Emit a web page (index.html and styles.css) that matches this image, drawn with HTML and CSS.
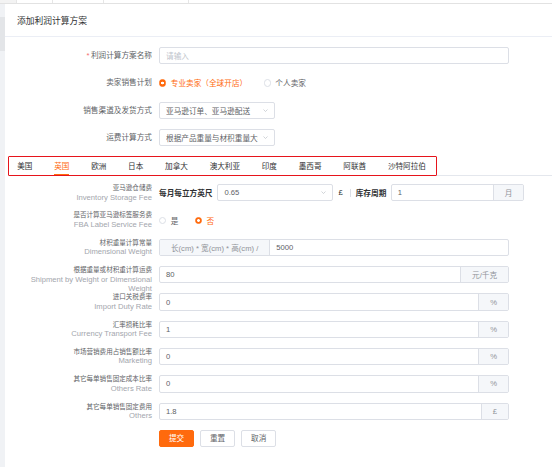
FILE: index.html
```html
<!DOCTYPE html>
<html lang="zh-CN">
<head>
<meta charset="utf-8">
<title>添加利润计算方案</title>
<link rel="stylesheet" href="styles.css">
</head>
<body>
<div class="page">
  <div class="topbar">
    <span class="tb tb-a"></span><span class="tb tb-b"></span><span class="tb tb-c"></span><span class="tb tb-d"></span>
  </div>
  <div class="main">
    <aside class="side"><div class="side-mark"></div></aside>
    <section class="panel">
      <header class="panel-head">添加利润计算方案</header>
      <form class="form">
        <div class="row">
          <label class="label"><span class="req">*</span>利润计算方案名称</label>
          <div class="input w-full"><span class="ph">请输入</span></div>
        </div>
        <div class="row">
          <label class="label">卖家销售计划</label>
          <div class="radios">
            <span class="radio checked"><i class="dot"></i>专业卖家（全球开店）</span>
            <span class="radio"><i class="dot"></i>个人卖家</span>
          </div>
        </div>
        <div class="row">
          <label class="label">销售渠道及发货方式</label>
          <div class="input select w-sel"><span class="val">亚马逊订单、亚马逊配送</span><svg class="chev" viewBox="0 0 10 6" width="5" height="3"><polyline points="1,1 5,5 9,1" fill="none" stroke="#b4b8bf" stroke-width="1.2"/></svg></div>
        </div>
        <div class="row">
          <label class="label">运费计算方式</label>
          <div class="input select w-sel"><span class="val">根据产品重量与材积重量大者计算</span><svg class="chev" viewBox="0 0 10 6" width="5" height="3"><polyline points="1,1 5,5 9,1" fill="none" stroke="#b4b8bf" stroke-width="1.2"/></svg></div>
        </div>

        <div class="tabs">
          <div class="tab-list">
            <span class="tab">美国</span>
            <span class="tab active">英国</span>
            <span class="tab">欧洲</span>
            <span class="tab">日本</span>
            <span class="tab">加拿大</span>
            <span class="tab">澳大利亚</span>
            <span class="tab">印度</span>
            <span class="tab">墨西哥</span>
            <span class="tab">阿联酋</span>
            <span class="tab">沙特阿拉伯</span>
          </div>
        </div>

        <div class="row">
          <label class="label multi"><span class="cn">亚马逊仓储费</span><span class="en">Inventory Storage Fee</span></label>
          <div class="inline">
            <span class="strong">每月每立方英尺</span>
            <div class="input select w-sel"><span class="val">0.65</span><svg class="chev" viewBox="0 0 10 6" width="5" height="3"><polyline points="1,1 5,5 9,1" fill="none" stroke="#b4b8bf" stroke-width="1.2"/></svg></div>
            <span class="cur">£</span>
            <span class="sep"></span>
            <span class="strong">库存周期</span>
            <div class="group w-cycle"><span class="field">1</span><span class="addon">月</span></div>
          </div>
        </div>
        <div class="row">
          <label class="label multi"><span class="cn">是否计算亚马逊标签服务费</span><span class="en">FBA Label Service Fee</span></label>
          <div class="radios">
            <span class="radio"><i class="dot"></i>是</span>
            <span class="radio checked"><i class="dot"></i>否</span>
          </div>
        </div>
        <div class="row">
          <label class="label multi"><span class="cn">材积重量计算常量</span><span class="en">Dimensional Weight</span></label>
          <div class="group w-full"><span class="addon pre">长(cm) * 宽(cm) * 高(cm) /</span><span class="field">5000</span></div>
        </div>
        <div class="row">
          <label class="label multi"><span class="cn">根据重量或材积重计算运费</span><span class="en">Shipment by Weight or Dimensional Weight</span></label>
          <div class="group w-full"><span class="field">80</span><span class="addon">元/千克</span></div>
        </div>
        <div class="row">
          <label class="label multi"><span class="cn">进口关税费率</span><span class="en">Import Duty Rate</span></label>
          <div class="group w-full"><span class="field">0</span><span class="addon">%</span></div>
        </div>
        <div class="row">
          <label class="label multi"><span class="cn">汇率损耗比率</span><span class="en">Currency Transport Fee</span></label>
          <div class="group w-full"><span class="field">1</span><span class="addon">%</span></div>
        </div>
        <div class="row">
          <label class="label multi"><span class="cn">市场营销费用占销售额比率</span><span class="en">Marketing</span></label>
          <div class="group w-full"><span class="field">0</span><span class="addon">%</span></div>
        </div>
        <div class="row">
          <label class="label multi"><span class="cn">其它每单销售固定成本比率</span><span class="en">Others Rate</span></label>
          <div class="group w-full"><span class="field">0</span><span class="addon">%</span></div>
        </div>
        <div class="row">
          <label class="label multi"><span class="cn">其它每单销售固定费用</span><span class="en">Others</span></label>
          <div class="group w-full"><span class="field">1.8</span><span class="addon">£</span></div>
        </div>
        <div class="actions">
          <button type="button" class="btn primary">提交</button>
          <button type="button" class="btn">重置</button>
          <button type="button" class="btn">取消</button>
        </div>
      </form>
    </section>
  </div>
</div>
</body>
</html>
```
FILE: styles.css
```css
* { box-sizing: border-box; }
html, body { margin: 0; padding: 0; }
body {
  width: 552px;
  height: 467px;
  overflow: hidden;
  background: #f0f2f5;
  font-family: "Liberation Sans", "Noto Sans CJK SC", sans-serif;
  font-size: 7.65px;
  color: #606266;
}
.page { display: flex; flex-direction: column; height: 467px; }

.topbar {
  display: flex;
  flex: none;
  height: 4px;
  background: #fff;
  border-bottom: 1px solid #e2e2e2;
}
.tb { height: 100%; border-right: 1px solid #e6e6e6; }
.tb-a { width: 17px; background: #f3f3f3; }
.tb-b { width: 36px; }
.tb-c { width: 51px; }
.tb-d { width: 85px; }

.main { display: flex; flex: 1; min-height: 0; }
.side { width: 5px; flex: none; background: #f0f2f5; }
.side-mark { margin-top: 13px; height: 34px; background: #e3e5e8; }
.panel { flex: 1; background: #fff; }

.panel-head {
  height: 33px;
  display: flex;
  align-items: center;
  padding-left: 12px;
  font-size: 8.75px;
  color: #303133;
  border-bottom: 1px solid #ebeef5;
}

.form { padding: 10px 0 0 17px; margin: 0; }

.row {
  display: flex;
  align-items: flex-start;
  height: 17.3px;
  margin-bottom: 10px;
}
.label {
  width: 137px;
  flex: none;
  padding-right: 7px;
  text-align: right;
  line-height: 17.3px;
  white-space: nowrap;
  color: #606266;
}
.label.multi { line-height: normal; white-space: normal; }
.req { color: #f56c6c; margin-right: 1.5px; }
.cn { display: block; font-size: 6.55px; line-height: 8.5px; color: #606266; }
.en { display: block; font-size: 7.65px; line-height: 9px; color: #a3a6ad; }

.input {
  height: 17.3px;
  border: 1px solid #dcdfe6;
  border-radius: 2px;
  display: flex;
  align-items: center;
  padding: 0 6px;
  color: #606266;
  overflow: hidden;
  white-space: nowrap;
  background: #fff;
  flex: none;
}
.ph { color: #c0c4cc; }
.w-full { width: 350px; }
.w-sel { width: 116px; }
.w-cycle { width: 133.5px; }
.select .val { flex: 1; overflow: hidden; white-space: nowrap; }
.chev { flex: none; margin-left: 5px; display: block; }

.radios { display: flex; align-items: center; height: 17.3px; }
.radio { display: flex; align-items: center; margin-right: 16.4px; color: #606266; white-space: nowrap; }
.dot {
  width: 7.2px;
  height: 7.2px;
  border: 1px solid #dcdfe6;
  border-radius: 50%;
  margin-right: 4.6px;
  background: #fff;
}
.radio.checked { color: #ff6a0d; }
.radio.checked .dot {
  border-color: #ff6a0d;
  background: radial-gradient(circle, #fff 0 1.2px, #ff6a0d 1.6px);
}

.tabs {
  display: flex;
  height: 20px;
  margin: 0.8px 0 8px -14px;
  border-bottom: 1px solid #e4e7ed;
}
.tab-list {
  display: flex;
  flex: none;
  align-items: center;
  height: 20px;
  width: 429px;
  padding-left: 8.2px;
  border: 1.5px solid #e6141c;
  border-radius: 1px;
}
.tab {
  position: relative;
  flex: none;
  white-space: nowrap;
  padding: 0 10.9px;
  line-height: 17px;
  color: #303133;
  font-size: 7.6px;
}
.tab:first-child { padding-left: 0; }
.tab.active { color: #ff6a0d; }
.tab.active::after {
  content: "";
  position: absolute;
  left: 10.9px;
  right: 10.9px;
  bottom: -0.5px;
  height: 1.6px;
  background: #ff6a0d;
}

.inline { display: flex; align-items: center; height: 17.3px; }
.strong { font-weight: bold; color: #303133; white-space: nowrap; }
.inline .strong:first-child { margin-right: 5px; }
.cur { margin-left: 5px; color: #303133; }
.sep { width: 1px; height: 8px; background: #dcdfe6; margin: 0 4.5px 0 7.5px; }
.inline .sep + .strong { margin-right: 4.4px; }

.group {
  display: flex;
  flex: none;
  height: 17.3px;
  border: 1px solid #dcdfe6;
  border-radius: 2px;
  overflow: hidden;
  background: #fff;
}
.field {
  flex: 1;
  display: flex;
  align-items: center;
  padding: 0 6px;
  color: #606266;
  white-space: nowrap;
}
.addon {
  flex: none;
  display: flex;
  align-items: center;
  padding: 0 10.9px;
  background: #f5f7fa;
  color: #909399;
  border-left: 1px solid #dcdfe6;
  white-space: nowrap;
}
.addon.pre { border-left: 0; border-right: 1px solid #dcdfe6; }

.actions { display: flex; gap: 6px; padding-left: 137px; }
.btn {
  font: inherit;
  height: 17.3px;
  padding: 0 8.9px;
  border: 1px solid #dcdfe6;
  border-radius: 2px;
  background: #fff;
  color: #606266;
  line-height: 1;
  cursor: pointer;
}
.btn.primary { background: #ff6a0d; border-color: #ff6a0d; color: #fff; }
```
